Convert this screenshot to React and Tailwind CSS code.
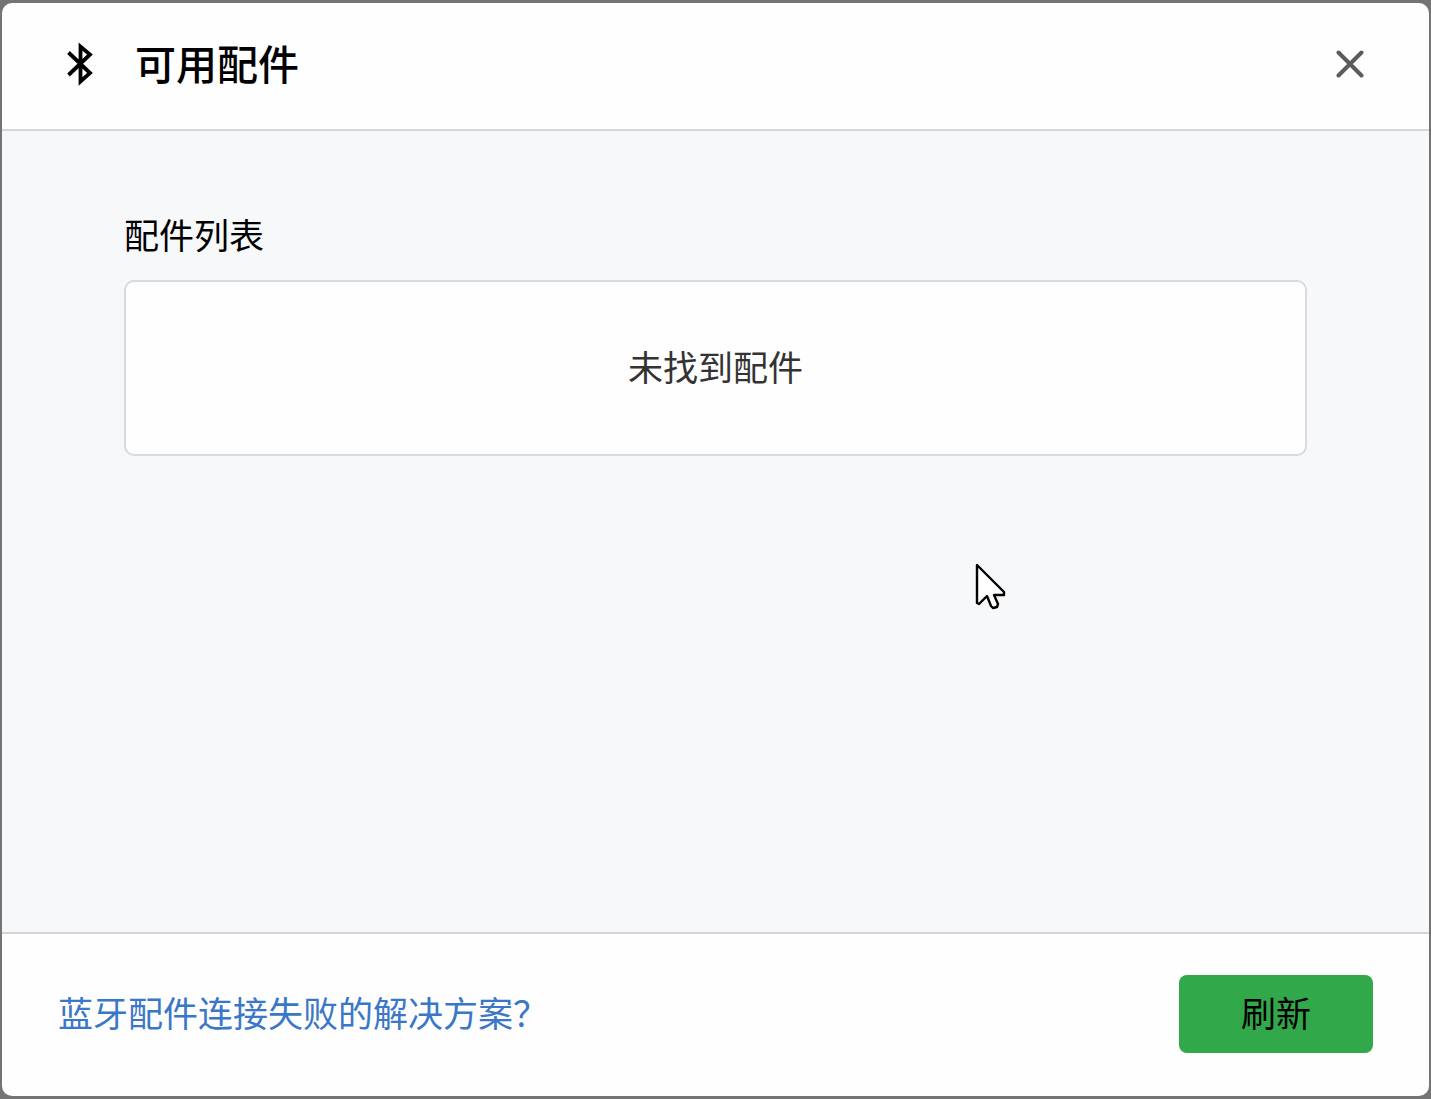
import { useState } from "react";

const BluetoothIcon = ({ className }) => (
  <svg viewBox="0 0 26 44" className={className} fill="none" stroke="currentColor" strokeWidth="3.8" aria-hidden="true">
    <path d="M1.5 10.5 L23 31 L13.5 39.5 V4.5 L23 12.5 L1.5 33" />
  </svg>
);

const CloseIcon = ({ className }) => (
  <svg viewBox="0 0 28 28" className={className} fill="none" stroke="currentColor" strokeWidth="4" strokeLinecap="round" aria-hidden="true">
    <path d="M2.5 2.5 L25.5 25.5 M25.5 2.5 L2.5 25.5" />
  </svg>
);

const Pointer = ({ className }) => (
  <svg viewBox="0 0 32 48" className={className} fill="#fff" stroke="#000" strokeWidth="2.4" strokeLinejoin="round" aria-hidden="true">
    <path d="M3 3 V41 L5 42 L13 34 L17 44 L19 46 L23 45 L24 42 L20 33 H30 V30 Z" />
  </svg>
);

export default function App() {
  const [accessories] = useState([]);

  return (
    <div className="min-h-screen flex bg-[#747474] px-[2px] py-[3px] font-['Noto_Sans_CJK_SC',sans-serif] text-[35px] leading-[52px] text-black">
      <div
        role="dialog"
        aria-labelledby="dialog-title"
        className="relative flex-1 flex flex-col bg-[#fefefe] rounded-[10px] overflow-hidden"
      >
        {/* Header */}
        <header className="flex items-center h-[128px] px-[65px] pb-[5px] border-b-2 border-[#d5d7dc]">
          <BluetoothIcon className="w-[26px] h-[44px] mr-[42px]" />
          <h1 id="dialog-title" className="flex-1 pb-1 text-[41px] leading-[60px] font-medium">
            可用配件
          </h1>
          <button type="button" aria-label="关闭" className="text-[#5b5b5b]">
            <CloseIcon className="w-7 h-7" />
          </button>
        </header>

        {/* Accessory list */}
        <main className="flex-1 bg-[#f7f8fa] px-[122px] pt-[77px]">
          <h2>配件列表</h2>
          <div className="mt-5 flex flex-col items-center justify-center min-h-[176px] pb-1 bg-[#fefefe] border-2 border-[#d8dade] rounded-[10px] text-[#333]">
            {accessories.length === 0 ? (
              <p>未找到配件</p>
            ) : (
              accessories.map((item) => <p key={item}>{item}</p>)
            )}
          </div>
        </main>

        {/* Footer */}
        <footer className="flex items-center justify-between h-[164px] pb-[2px] px-14 border-t-2 border-[#d2d4d9]">
          <a href="#help" className="pb-1 text-[#3a77c8]">
            蓝牙配件连接失败的解决方案？
          </a>
          <button type="button" className="w-[194px] h-[78px] pb-1 bg-[#31a84a] rounded-lg">
            刷新
          </button>
        </footer>

        <Pointer className="absolute left-[972px] top-[559px] w-[32px] h-[48px] pointer-events-none" />
      </div>
    </div>
  );
}
